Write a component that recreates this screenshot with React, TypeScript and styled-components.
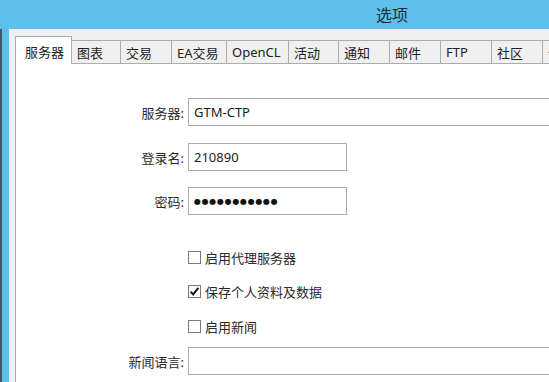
import React from "react";
import styled, { createGlobalStyle } from "styled-components";

const Global = createGlobalStyle`
  html, body { margin: 0; padding: 0; background: #ffffff; overflow: hidden; }
  body { font-family: "Segoe UI", "Noto Sans", "Noto Sans CJK SC", sans-serif; }
  * { box-sizing: border-box; }
`;

const FONT = `"Segoe UI", "Noto Sans", "Noto Sans CJK SC", sans-serif`;

const Window = styled.div`
  width: 784px;
  height: 382px;
  display: flex;
  flex-direction: column;
  overflow: hidden;
`;

const TitleBar = styled.div`
  height: 29px;
  flex-shrink: 0;
  background: #5ebfea;
  display: flex;
  align-items: center;
  justify-content: center;
  font-family: ${FONT};
  font-size: 16px;
  color: #1d2b35;
  padding-bottom: 2px;
`;

const Frame = styled.div`
  flex: 1;
  display: flex;
  min-height: 0;
`;

const LeftEdge = styled.div`
  width: 9px;
  flex-shrink: 0;
  background: linear-gradient(to right, #3f5a6c 0 2px, #5ebfea 2px 9px);
`;

const Dialog = styled.div`
  flex: 1;
  background: #eef1f4;
  padding: 7px 0 0 6px;
  display: flex;
  flex-direction: column;
  min-width: 0;
`;

const TabStrip = styled.div`
  height: 28px;
  display: flex;
  align-items: flex-end;
  flex-shrink: 0;
`;

const Tab = styled.div<{ $w: number; $active?: boolean }>`
  flex-shrink: 0;
  width: ${(p) => p.$w}px;
  height: ${(p) => (p.$active ? 28 : 24)}px;
  background: ${(p) => (p.$active ? "#ffffff" : "#f0f0f0")};
  border: 1px solid #acacac;
  border-left: ${(p) => (p.$active ? "1px solid #acacac" : "none")};
  border-bottom: ${(p) => (p.$active ? "none" : "1px solid #acacac")};
  padding: ${(p) => (p.$active ? "1px 0 0 9px" : "0 0 0 5px")};
  display: flex;
  align-items: center;
  font-family: ${FONT};
  font-size: 13px;
  color: #222;
  white-space: nowrap;
  overflow: hidden;
`;

const Panel = styled.div`
  flex: 1;
  background: #ffffff;
  border-left: 1px solid #acacac;
  padding-top: 34px;
  display: flex;
  flex-direction: column;
`;

const Row = styled.div<{ $mt: number; $h: number }>`
  display: grid;
  grid-template-columns: 168px 1fr;
  column-gap: 4px;
  align-items: center;
  margin-top: ${(p) => p.$mt}px;
  height: ${(p) => p.$h}px;
`;

const Label = styled.div`
  text-align: right;
  font-family: ${FONT};
  font-size: 13px;
  color: #2a2a2a;
  white-space: nowrap;
`;

const Field = styled.div<{ $w: number }>`
  width: ${(p) => p.$w}px;
  height: 28px;
  border: 1px solid #ababab;
  background: #fff;
  display: flex;
  align-items: center;
  padding-left: 5px;
  font-family: ${FONT};
  font-size: 13px;
  color: #1a1a1a;
  white-space: nowrap;
`;

const Dots = styled.span`
  font-family: "DejaVu Sans", sans-serif;
  font-size: 8px;
  letter-spacing: 0.7px;
  color: #111;
`;

const Check = styled.div`
  display: flex;
  align-items: center;
  gap: 4px;
  font-family: ${FONT};
  font-size: 13px;
  color: #2a2a2a;
  white-space: nowrap;
`;

const Box = styled.div`
  width: 13px;
  height: 13px;
  border: 1px solid #7a7a7a;
  background: #fff;
  display: flex;
  align-items: center;
  justify-content: center;
`;

const tabs: { label: string; w: number; active?: boolean }[] = [
  { label: "服务器", w: 57, active: true },
  { label: "图表", w: 49 },
  { label: "交易", w: 51 },
  { label: "EA交易", w: 55 },
  { label: "OpenCL", w: 62 },
  { label: "活动", w: 50 },
  { label: "通知", w: 51 },
  { label: "邮件", w: 51 },
  { label: "FTP", w: 51 },
  { label: "社区", w: 51 },
  { label: "信号", w: 51 },
];

const CheckMark = () => (
  <svg width="11" height="11" viewBox="0 0 11 11">
    <path d="M1.6 5.6 L4.2 8.4 L9.3 1.8" fill="none" stroke="#1a1a1a" strokeWidth="2.1" />
  </svg>
);

const CheckRow = ({ mt, label, checked }: { mt: number; label: string; checked?: boolean }) => (
  <Row $mt={mt} $h={20}>
    <span />
    <Check>
      <Box>{checked && <CheckMark />}</Box>
      {label}
    </Check>
  </Row>
);

export default function App() {
  return (
    <>
      <Global />
      <Window>
        <TitleBar>选项</TitleBar>
        <Frame>
          <LeftEdge />
          <Dialog>
            <TabStrip>
              {tabs.map((t) => (
                <Tab key={t.label} $w={t.w} $active={t.active}>
                  {t.label}
                </Tab>
              ))}
            </TabStrip>
            <Panel>
              <Row $mt={0} $h={28}>
                <Label>服务器:</Label>
                <Field $w={460}>GTM-CTP</Field>
              </Row>
              <Row $mt={17} $h={28}>
                <Label>登录名:</Label>
                <Field $w={159}>210890</Field>
              </Row>
              <Row $mt={16} $h={28}>
                <Label>密码:</Label>
                <Field $w={159}>
                  <Dots>●●●●●●●●●●●</Dots>
                </Field>
              </Row>
              <CheckRow mt={32} label="启用代理服务器" />
              <CheckRow mt={14} label="保存个人资料及数据" checked />
              <CheckRow mt={15} label="启用新闻" />
              <Row $mt={11} $h={28}>
                <Label>新闻语言:</Label>
                <Field $w={460} />
              </Row>
            </Panel>
          </Dialog>
        </Frame>
      </Window>
    </>
  );
}
